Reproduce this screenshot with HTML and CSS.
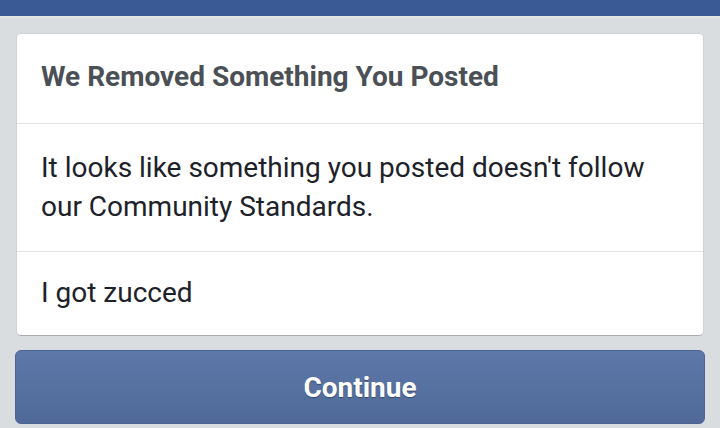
FILE: index.html
```html
<!DOCTYPE html>
<html lang="en">
<head>
  <meta charset="UTF-8">
  <title>We Removed Something You Posted</title>
  <link rel="stylesheet" href="styles.css">
</head>
<body>
  <div class="topbar"></div>

  <div class="page">
    <!-- Notice card -->
    <div class="card">
      <div class="card-header">We Removed Something You Posted</div>
      <div class="card-body">It looks like something you posted doesn't follow our Community Standards.</div>
      <div class="card-footer">I got zucced</div>
    </div>

    <button class="continue-btn">Continue</button>
  </div>
</body>
</html>
```

FILE: styles.css
```css
body {
  margin: 0;
  font-family: Roboto, "Liberation Sans", Arial, sans-serif;
  background: #dadde0;
  overflow: hidden;
}
.topbar {
  height: 16px;
  background: #3a5a95;
  border-bottom: 2px solid #e3e7e4;
}
.page {
  padding: 15px 16px 0;
}
.card {
  background: #fff;
  border: 1px solid #cfd2d6;
  border-bottom-color: #a9adb3;
  border-radius: 5px;
}
.card-header {
  padding: 28px 24px 31px;
  font-size: 28px;
  line-height: 30px;
  font-weight: bold;
  color: #4b4f56;
  border-bottom: 1px solid #e3e4e6;
}
.card-body {
  padding: 24px 24px 25px;
  font-size: 28px;
  line-height: 39px;
  color: #1d2129;
  border-bottom: 1px solid #e3e4e6;
}
.card-footer {
  padding: 21px 24px 23px;
  font-size: 28px;
  line-height: 39px;
  color: #1d2129;
}
.continue-btn {
  display: block;
  width: calc(100% + 2px);
  height: 74px;
  margin: 14px -1px 0;
  border: 1px solid #4c6493;
  border-radius: 6px;
  background: linear-gradient(#5d79a9, #506998);
  color: #fff;
  font-family: Roboto, "Liberation Sans", Arial, sans-serif;
  font-size: 28px;
  font-weight: bold;
  text-shadow: 0 1px 1px rgba(0, 0, 0, 0.35);
  cursor: pointer;
}
```
